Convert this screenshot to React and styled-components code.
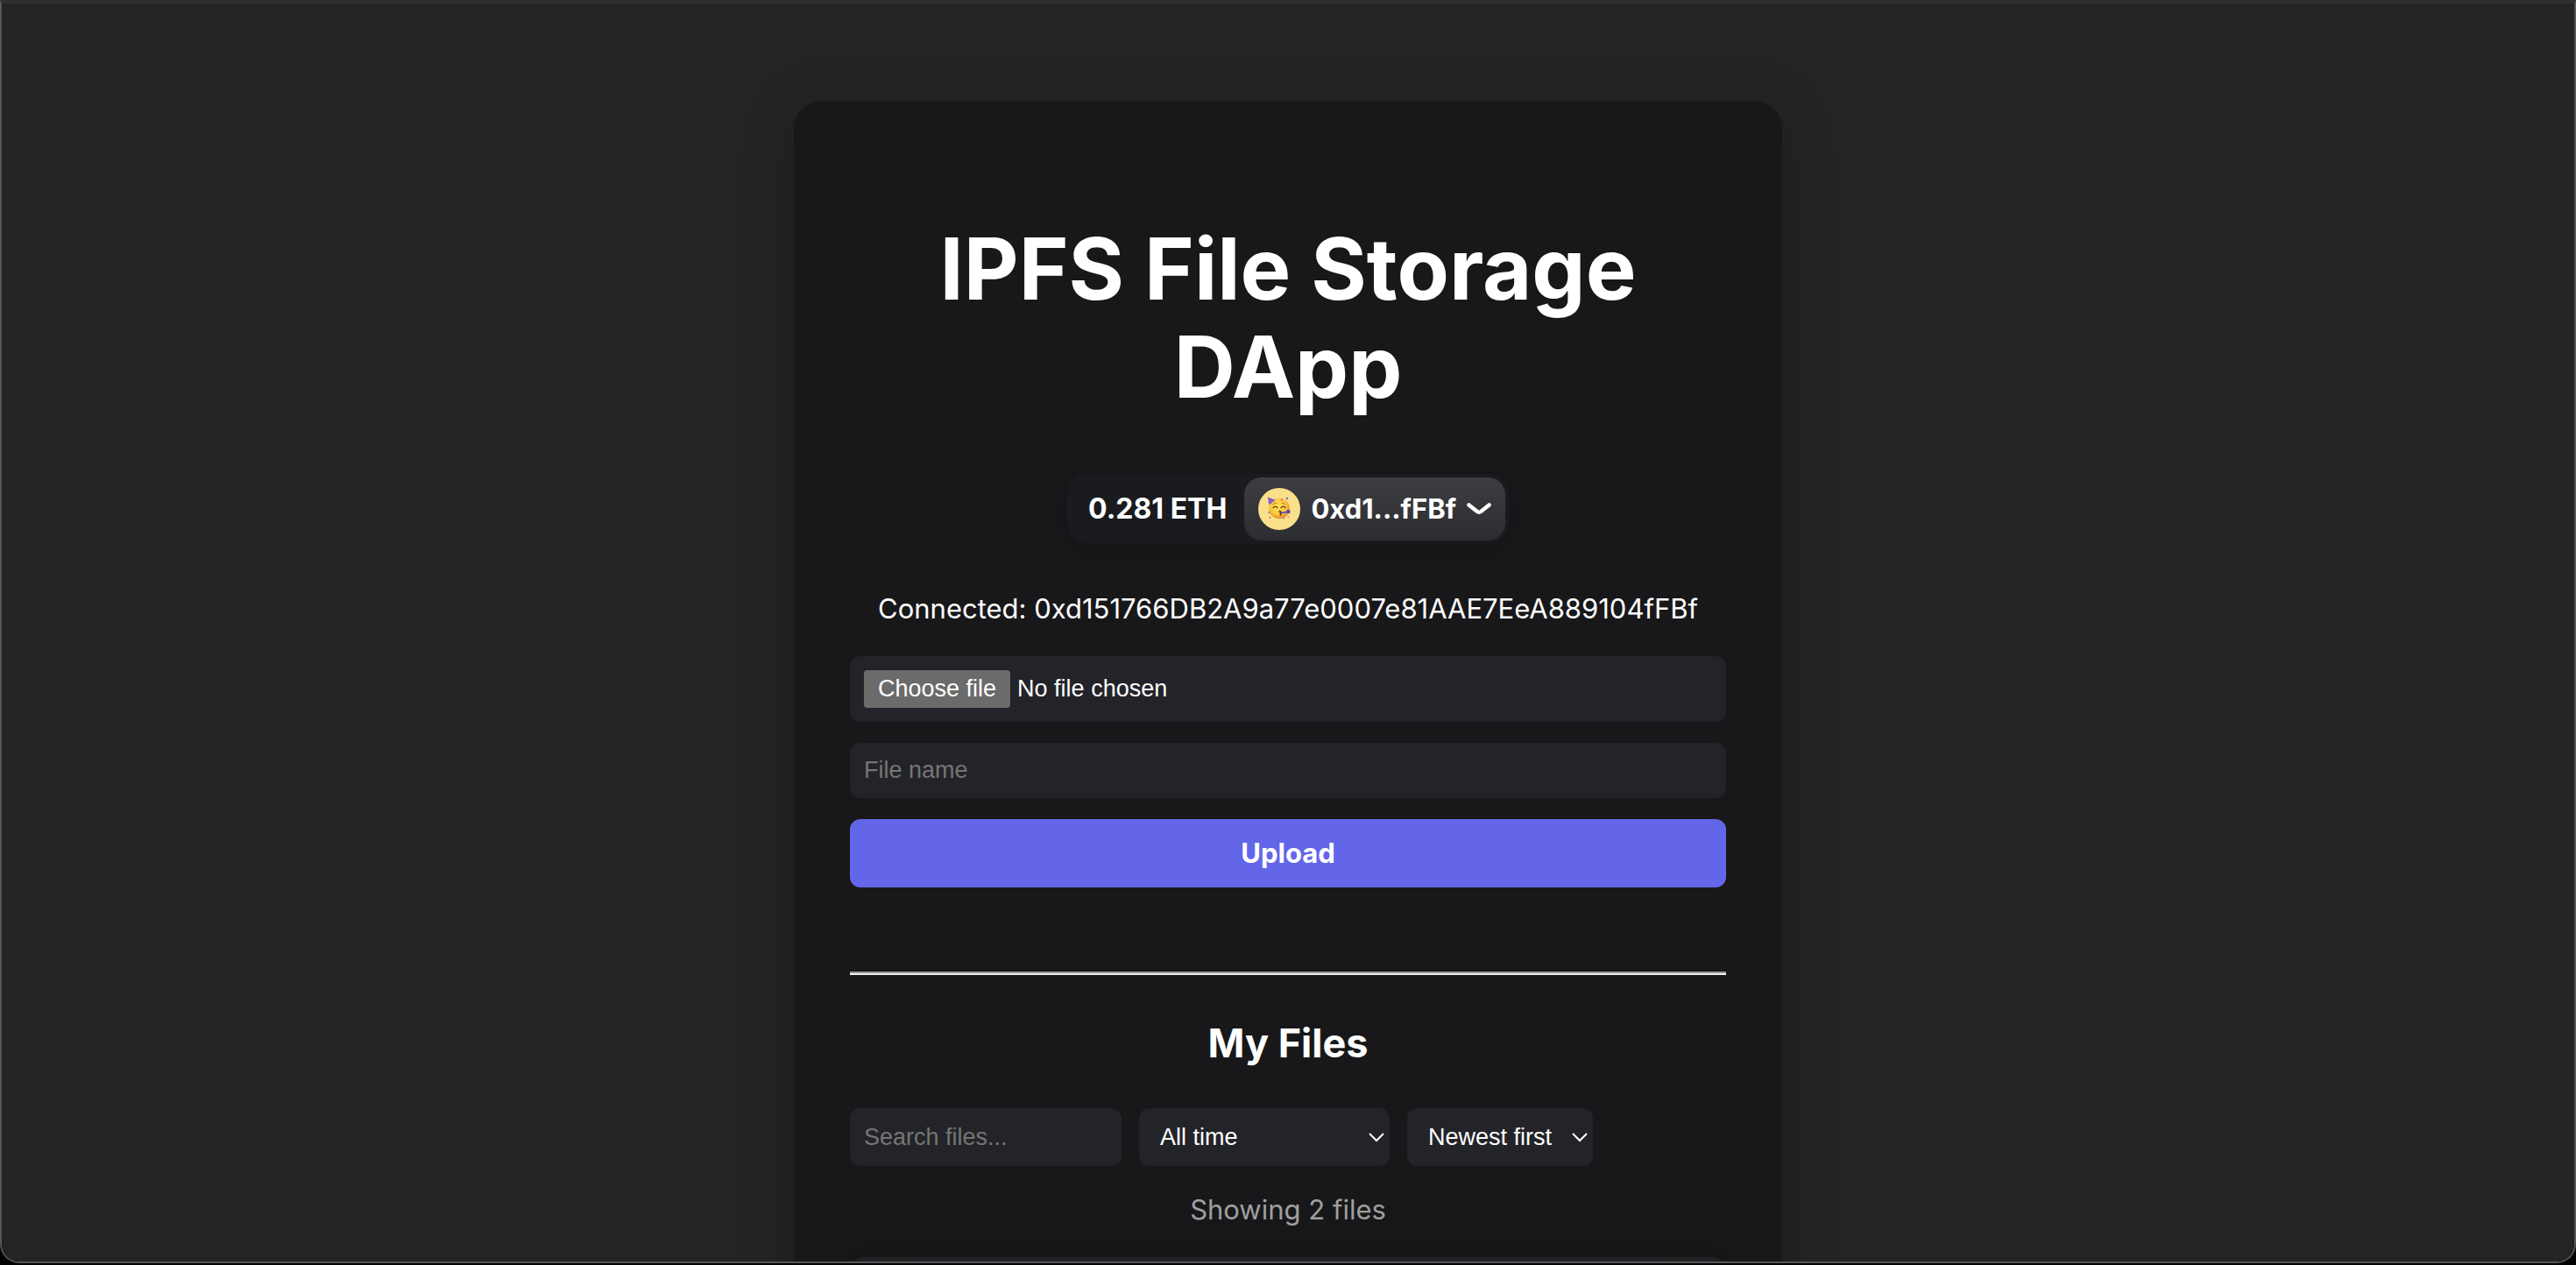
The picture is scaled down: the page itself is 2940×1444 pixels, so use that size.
import React, { useState } from "react";
import styled, { createGlobalStyle } from "styled-components";

const sans = `Inter, "Liberation Sans", sans-serif`;
const control = `"Liberation Sans", Arial, sans-serif`;

const GlobalStyle = createGlobalStyle`
  *, *::before, *::after { box-sizing: border-box; }
  body { margin: 0; background: #000; color: #fff; font-family: ${sans}; }
`;

const WindowFrame = styled.div`
  height: calc(100vh - 2px);
  border: 2px solid #555555;
  border-top: 4px solid #2f2f32;
  border-radius: 0 0 22px 22px;
  background: #242424;
  overflow-y: auto;
  scrollbar-width: none;
`;

const Card = styled.main`
  width: min(100%, 1128px);
  margin: 111px auto 64px;
  padding: 136px 64px 64px;
  border-radius: 32px;
  background: #18181a;
  box-shadow: 0 8px 64px rgba(0, 0, 0, 0.2);
  display: flex;
  flex-direction: column;
`;

const Title = styled.h1`
  margin: 0 0 66px;
  font-size: 97px;
  line-height: 112px;
  font-weight: 700;
  text-align: center;
`;

const Wallet = styled.div`
  align-self: center;
  display: flex;
  align-items: center;
  padding: 4px;
  border-radius: 24px;
  background: #1a1b1f;
  box-shadow: 0 8px 24px rgba(0, 0, 0, 0.15);
  font-size: 32px;
  line-height: 40px;
  font-weight: 700;
`;

const Balance = styled.span`
  padding: 0 20px;
`;

const AccountButton = styled.button`
  display: flex;
  align-items: center;
  gap: 12px;
  height: 72px;
  padding: 0 16px;
  border: 0;
  border-radius: 20px;
  background: linear-gradient(#3d3e42, #2c2d31);
  color: #fff;
  font: 700 31px/40px ${sans};
  cursor: pointer;
`;

const Avatar = styled.svg`
  width: 48px;
  height: 48px;
  flex: none;
`;

const Chevron = styled.svg`
  width: 28px;
  height: 14px;
`;

const Connected = styled.p`
  margin: 54px 0 34px;
  font-size: 31px;
  line-height: 40px;
  text-align: center;
  overflow-wrap: anywhere;
`;

const UploadForm = styled.form`
  display: flex;
  flex-direction: column;
  gap: 24px;
`;

const FilePicker = styled.label`
  display: flex;
  align-items: center;
  gap: 8px;
  padding: 16px;
  border-radius: 12px;
  background: #232429;
  font: 27px/43px ${control};
  cursor: pointer;
`;

const HiddenFileInput = styled.input`
  position: absolute;
  width: 1px;
  height: 1px;
  opacity: 0;
`;

const FileButton = styled.span`
  padding: 0 16px;
  border-radius: 4px;
  background: #6b6b6b;
`;

const TextInput = styled.input`
  width: ${(p) => p.$width || "100%"};
  min-width: 0;
  padding: 16px;
  border: 0;
  border-radius: 12px;
  background: #232429;
  color: #fff;
  font: 27px/31px ${control};
  &::placeholder { color: #757575; opacity: 1; }
`;

const UploadButton = styled.button`
  height: 78px;
  border: 0;
  border-radius: 12px;
  background: #6366e9;
  color: #fff;
  font: 700 31px/40px ${sans};
  cursor: pointer;
`;

const Divider = styled.hr`
  width: 100%;
  height: 4px;
  margin: 96px 0 48px;
  border: 0;
  border-top: 2px solid #9a9a9a;
  border-bottom: 2px solid #eeeeee;
`;

const SectionTitle = styled.h2`
  margin: 0 0 44px;
  font-size: 45px;
  line-height: 60px;
  font-weight: 700;
  text-align: center;
`;

const Filters = styled.div`
  display: flex;
  flex-wrap: wrap;
  gap: 20px;
`;

const arrow = `url("data:image/svg+xml,%3Csvg xmlns='http://www.w3.org/2000/svg' width='18' height='11' fill='none' stroke='white' stroke-width='2'%3E%3Cpath d='M1 1l8 8 8-8'/%3E%3C/svg%3E")`;

const Select = styled.select`
  appearance: none;
  width: ${(p) => p.$width};
  height: 66px;
  padding: 0 24px;
  border: 0;
  border-radius: 12px;
  background: #232429 ${arrow} no-repeat right 6px center;
  color: #fff;
  font: 27px/31px ${control};
`;

const Count = styled.p`
  margin: 30px 0 34px;
  font-size: 31px;
  line-height: 40px;
  color: #a0a0a0;
  text-align: center;
`;

const FileCard = styled.article`
  min-height: 160px;
  border-radius: 16px;
  background: #202025;
  box-shadow: 0 4px 64px rgba(0, 0, 0, 0.2);
`;

function PartyFace() {
  return (
    <Avatar viewBox="0 0 48 48" aria-hidden="true">
      <defs>
        <radialGradient id="face" cx="45%" cy="40%" r="60%">
          <stop offset="0" stopColor="#ffe45c" />
          <stop offset="0.65" stopColor="#fbc63c" />
          <stop offset="1" stopColor="#e38d22" />
        </radialGradient>
      </defs>
      <circle cx="24" cy="24" r="24" fill="#fae08a" />
      <circle cx="24" cy="23.5" r="11.8" fill="url(#face)" />
      <path d="M11 10.5l8.6 3.2-7.2 5.6z" fill="#6a4bc4" />
      <path d="M12.6 11.1l-.5 4.4M15 12l-1.600 6.300M17.400 12.900l-2.400 4.400" stroke="#a07ae8" strokeWidth="0.9" />
      <path d="M17.200 22.500q2.400-2.600 4.800 0M26 22.500q2.400-2.600 4.800 0" fill="none" stroke="#5a3510" strokeWidth="1.300" strokeLinecap="round" />
      <path d="M17 18.600q2-1.600 4-1.200M27.500 17.400q2 0 3.300 1.400" fill="none" stroke="#a86a1c" strokeWidth="0.900" strokeLinecap="round" />
      <path d="M24 26.500q3 .2 1 2 2.400 1 .2 2.600" fill="none" stroke="#4d2c12" strokeWidth="1.300" strokeLinecap="round" />
      <path d="M26 28.600l8-1.400" stroke="#5a4fc0" strokeWidth="1.800" />
      <circle cx="34.500" cy="27" r="2.200" fill="#5448b8" />
      <circle cx="33" cy="12" r="1.200" fill="#4f6fd6" />
      <circle cx="27" cy="13.400" r="0.900" fill="#d2447a" />
      <circle cx="12.300" cy="28" r="1" fill="#5a78dc" />
      <circle cx="13.600" cy="33.700" r="1" fill="#e0518a" />
      <circle cx="34.500" cy="33" r="0.800" fill="#e0718a" />
      <circle cx="29" cy="34.500" r="0.900" fill="#8a6ad0" />
    </Avatar>
  );
}

export default function App() {
  const [picked, setPicked] = useState("No file chosen");
  return (
    <WindowFrame>
      <GlobalStyle />
      <Card>
        <Title>IPFS File Storage DApp</Title>
        <Wallet>
          <Balance>0.281 ETH</Balance>
          <AccountButton type="button">
            <PartyFace />
            0xd1...fFBf
            <Chevron viewBox="0 0 28 14" fill="none" aria-hidden="true">
              <path d="M2.500 2.500l9.500 7.500q2 1.400 4 0l9.500-7.500" stroke="#fff" strokeWidth="4.500" strokeLinecap="round" />
            </Chevron>
          </AccountButton>
        </Wallet>
        <Connected>Connected: 0xd151766DB2A9a77e0007e81AAE7EeA889104fFBf</Connected>
        <UploadForm onSubmit={(e) => e.preventDefault()}>
          <FilePicker>
            <HiddenFileInput
              type="file"
              onChange={(e) => setPicked(e.target.files[0]?.name || "No file chosen")}
            />
            <FileButton>Choose file</FileButton>
            <span>{picked}</span>
          </FilePicker>
          <TextInput type="text" placeholder="File name" aria-label="File name" />
          <UploadButton type="submit">Upload</UploadButton>
        </UploadForm>
        <Divider />
        <SectionTitle>My Files</SectionTitle>
        <Filters>
          <TextInput $width="310px" type="text" placeholder="Search files..." aria-label="Search files" />
          <Select $width="286px" aria-label="Time range">
            <option>All time</option>
          </Select>
          <Select $width="212px" aria-label="Sort order">
            <option>Newest first</option>
          </Select>
        </Filters>
        <Count>Showing 2 files</Count>
        <FileCard />
      </Card>
    </WindowFrame>
  );
}
